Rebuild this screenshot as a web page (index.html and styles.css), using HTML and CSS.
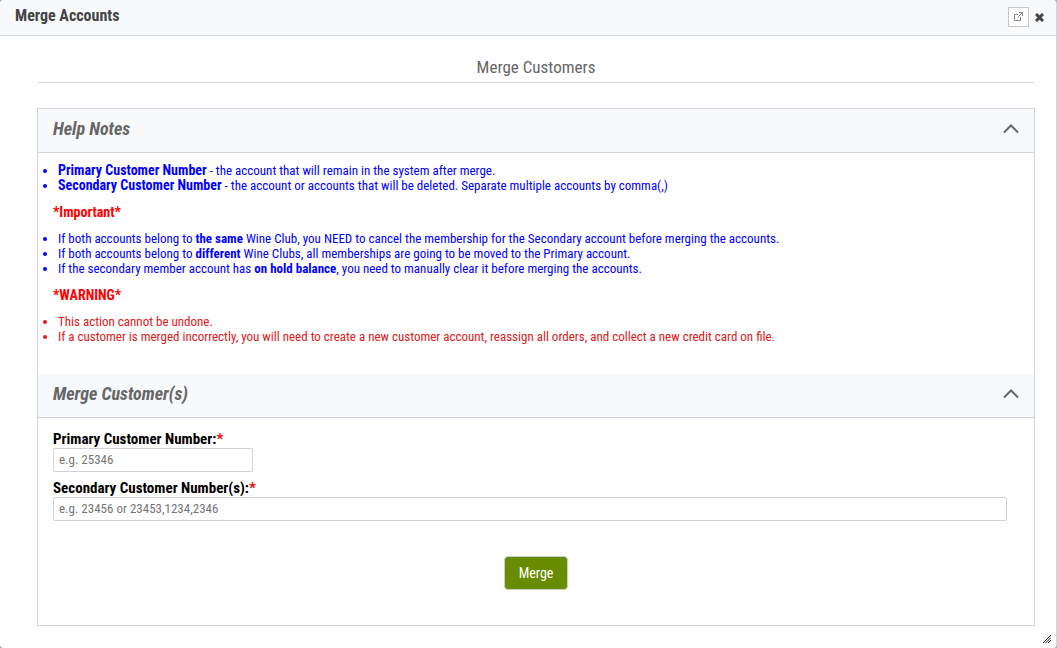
FILE: index.html
```
<!DOCTYPE html>
<html lang="en">
<head>
<meta charset="utf-8">
<title>Merge Accounts</title>
<link rel="stylesheet" href="styles.css">
</head>
<body>
<div class="dialog">
  <header class="titlebar">
    <h1 class="titlebar-text">Merge Accounts</h1>
    <button class="popout" type="button" aria-label="Open in new window">
      <svg width="9" height="9" viewBox="0 0 9 9" fill="none" stroke="#888"><path d="M4 2.500H.5v6h6V5M5 .5h3.500V4M8.500.5l-5 5"/></svg>
    </button>
    <button class="close" type="button" aria-label="Close">
      <svg width="9" height="9" viewBox="0 0 9 9" stroke="#444" stroke-width="3"><path d="M1 1l7 7M8 1l-7 7"/></svg>
    </button>
  </header>
  <main class="content">
    <h2 class="page-title">Merge Customers</h2>
    <div class="panel">
      <section>
        <header class="section-head">
          <h3 class="section-title">Help Notes</h3>
          <button class="toggle" type="button" aria-label="Collapse Help Notes">
            <svg width="16" height="10" viewBox="0 0 16 10" fill="none" stroke="#666" stroke-width="2"><path d="M1 8.500l7-7 7 7"/></svg>
          </button>
        </header>
        <div class="notes">
          <ul class="list">
            <li><b>Primary Customer Number</b> - the account that will remain in the system after merge.</li>
            <li><b>Secondary Customer Number</b> - the account or accounts that will be deleted. Separate multiple accounts by comma(,)</li>
          </ul>
          <p class="alert">*Important*</p>
          <ul class="list">
            <li>If both accounts belong to <b>the same</b> Wine Club, you NEED to cancel the membership for the Secondary account before merging the accounts.</li>
            <li>If both accounts belong to <b>different</b> Wine Clubs, all memberships are going to be moved to the Primary account.</li>
            <li>If the secondary member account has <b>on hold balance</b>, you need to manually clear it before merging the accounts.</li>
          </ul>
          <p class="alert">*WARNING*</p>
          <ul class="list list-warning">
            <li>This action cannot be undone.</li>
            <li>If a customer is merged incorrectly, you will need to create a new customer account, reassign all orders, and collect a new credit card on file.</li>
          </ul>
        </div>
      </section>
      <section>
        <header class="section-head">
          <h3 class="section-title">Merge Customer(s)</h3>
          <button class="toggle" type="button" aria-label="Collapse Merge Customer(s)">
            <svg width="16" height="10" viewBox="0 0 16 10" fill="none" stroke="#666" stroke-width="2"><path d="M1 8.500l7-7 7 7"/></svg>
          </button>
        </header>
        <form class="form">
          <div class="fields">
            <label class="label" for="primary">Primary Customer Number:<span class="required">*</span></label>
            <input class="input input-short" id="primary" type="text" placeholder="e.g. 25346">
            <label class="label" for="secondary">Secondary Customer Number(s):<span class="required">*</span></label>
            <input class="input" id="secondary" type="text" placeholder="e.g. 23456 or 23453,1234,2346">
          </div>
          <button class="merge" type="button">Merge</button>
        </form>
      </section>
    </div>
  </main>
  <svg class="grip" width="8" height="8" viewBox="0 0 8 8" stroke="#222"><path d="M0 8L8 0M2.500 8L8 2.500M5 8l3-3"/></svg>
</div>
</body>
</html>
```
FILE: styles.css
```
* { box-sizing: border-box; }
body {
  margin: 0;
  background: #aaa;
  font-family: "Roboto Condensed", "Liberation Sans Narrow", Roboto, sans-serif;
  font-size: 13px;
  line-height: 15px;
  color: #000;
}
h1, h2, h3, p, ul { margin: 0; padding: 0; }
button { margin: 0; padding: 0; font: inherit; cursor: pointer; }
svg { display: block; }
.dialog {
  position: relative;
  min-height: 100vh;
  background: #fff;
  border-right: 1px solid #d3d5db;
  border-radius: 4px;
  overflow: hidden;
}
.titlebar {
  display: flex;
  align-items: center;
  gap: 6px;
  height: 36px;
  padding: 0 12px 2px 15px;
  background: #f8f9fb;
  border-bottom: 1px solid #d0d4de;
}
.titlebar-text {
  flex: 1;
  padding-bottom: 2px;
  font-size: 16px;
  line-height: 20px;
  color: #444;
}
.popout {
  display: grid;
  place-items: center;
  width: 21px;
  height: 20px;
  background: #fff;
  border: 1px solid #c8c8c8;
}
.close, .toggle { border: 0; background: none; }
.close { padding-top: 1px; }
.content { padding: 18px 21px 22px 37px; }
.page-title {
  padding-bottom: 2px;
  border-bottom: 1px solid #d3d7e0;
  font-size: 17px;
  font-weight: 400;
  line-height: 26px;
  text-align: center;
  color: #666;
}
.panel {
  margin-top: 25px;
  border: 1px solid #d3d5dd;
}
.section-head {
  display: flex;
  align-items: center;
  justify-content: space-between;
  height: 44px;
  padding: 0 15px 3px;
  background: #f8f9fb;
  border-bottom: 1px solid #d3d5dd;
}
.section-title {
  font-size: 18px;
  font-style: italic;
  line-height: 24px;
  color: #666;
}
.notes { padding: 10px 15px 30px; }
.list {
  margin-left: 5px;
  color: #00f;
}
.list-warning { color: #dc2020; }
.list li:only-child b, .list b { font-weight: 700; }
.list:first-child b { font-size: 14px; line-height: 14px; }
.alert {
  margin: 12px 0 11px;
  font-size: 14px;
  font-weight: 700;
  color: #f00;
}
.form {
  display: flex;
  flex-direction: column;
  padding: 12px 15px 35px;
}
.fields {
  display: flex;
  flex-direction: column;
  padding-right: 12px;
}
.label {
  font-size: 15px;
  line-height: 18px;
  font-weight: 700;
}
.required { color: #f00; }
.input {
  width: 100%;
  height: 24px;
  margin-bottom: 7px;
  padding: 0 5px 1px;
  border: 1px solid #d0d4da;
  border-radius: 2px;
  font: inherit;
}
.input-short { max-width: 200px; }
.input::placeholder { color: #757575; opacity: 1; }
.merge {
  align-self: center;
  margin-top: 28px;
  padding: 8px 14px;
  border: 1px solid #ccd0cc;
  border-radius: 4px;
  background: #688c00;
  color: #fff;
  font-size: 14px;
  line-height: 16px;
}
.grip {
  position: absolute;
  right: 5px;
  bottom: 5px;
}
```
